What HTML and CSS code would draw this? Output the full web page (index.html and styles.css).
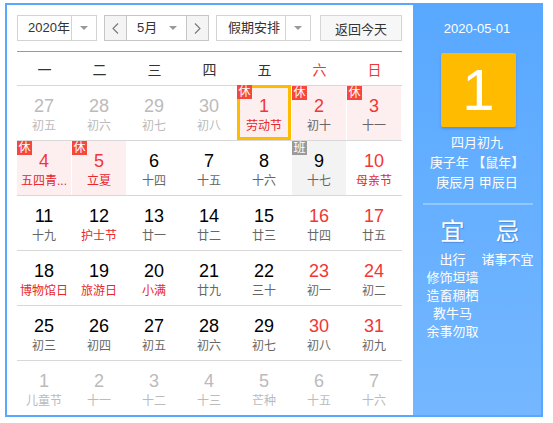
FILE: index.html
```html
<!DOCTYPE html>
<html lang="zh-CN">
<head>
<meta charset="utf-8">
<title>万年历</title>
<link rel="stylesheet" href="styles.css">
</head>
<body>
<div class="cal">
  <div class="main">
    <div class="toolbar">
      <div class="sel year"><span class="sel-text">2020年</span><span class="sel-arrow"><i class="tri"></i></span></div>
      <div class="month">
        <span class="nav prev"><svg width="7" height="11" viewBox="0 0 7 11"><path d="M6 0.5 L1 5.5 L6 10.5" fill="none" stroke="#777" stroke-width="1.1"/></svg></span>
        <span class="month-mid"><span class="m-text">5月</span><i class="tri"></i></span>
        <span class="nav next"><svg width="7" height="11" viewBox="0 0 7 11"><path d="M1 0.5 L6 5.5 L1 10.5" fill="none" stroke="#777" stroke-width="1.1"/></svg></span>
      </div>
      <div class="sel holiday"><span class="sel-text">假期安排</span><span class="sel-arrow"><i class="tri"></i></span></div>
      <button class="today">返回今天</button>
    </div>
    <div class="grid">
      <div class="week"><span>一</span><span>二</span><span>三</span><span>四</span><span>五</span><span class="red">六</span><span class="red">日</span></div>
      <div class="row">
        <div class="cell other"><span class="num">27</span><span class="lunar">初五</span></div>
        <div class="cell other"><span class="num">28</span><span class="lunar">初六</span></div>
        <div class="cell other"><span class="num">29</span><span class="lunar">初七</span></div>
        <div class="cell other"><span class="num">30</span><span class="lunar">初八</span></div>
        <div class="cell rest picked"><span class="tag">休</span><span class="num red">1</span><span class="lunar fest">劳动节</span></div>
        <div class="cell rest"><span class="tag">休</span><span class="num red">2</span><span class="lunar">初十</span></div>
        <div class="cell rest"><span class="tag">休</span><span class="num red">3</span><span class="lunar">十一</span></div>
      </div>
      <div class="row">
        <div class="cell rest"><span class="tag">休</span><span class="num red">4</span><span class="lunar fest">五四青...</span></div>
        <div class="cell rest"><span class="tag">休</span><span class="num red">5</span><span class="lunar fest">立夏</span></div>
        <div class="cell"><span class="num">6</span><span class="lunar">十四</span></div>
        <div class="cell"><span class="num">7</span><span class="lunar">十五</span></div>
        <div class="cell"><span class="num">8</span><span class="lunar">十六</span></div>
        <div class="cell work"><span class="tag">班</span><span class="num">9</span><span class="lunar">十七</span></div>
        <div class="cell"><span class="num red">10</span><span class="lunar fest">母亲节</span></div>
      </div>
      <div class="row">
        <div class="cell"><span class="num">11</span><span class="lunar">十九</span></div>
        <div class="cell"><span class="num">12</span><span class="lunar fest">护士节</span></div>
        <div class="cell"><span class="num">13</span><span class="lunar">廿一</span></div>
        <div class="cell"><span class="num">14</span><span class="lunar">廿二</span></div>
        <div class="cell"><span class="num">15</span><span class="lunar">廿三</span></div>
        <div class="cell"><span class="num red">16</span><span class="lunar">廿四</span></div>
        <div class="cell"><span class="num red">17</span><span class="lunar">廿五</span></div>
      </div>
      <div class="row">
        <div class="cell"><span class="num">18</span><span class="lunar fest">博物馆日</span></div>
        <div class="cell"><span class="num">19</span><span class="lunar fest">旅游日</span></div>
        <div class="cell"><span class="num">20</span><span class="lunar fest">小满</span></div>
        <div class="cell"><span class="num">21</span><span class="lunar">廿九</span></div>
        <div class="cell"><span class="num">22</span><span class="lunar">三十</span></div>
        <div class="cell"><span class="num red">23</span><span class="lunar">初一</span></div>
        <div class="cell"><span class="num red">24</span><span class="lunar">初二</span></div>
      </div>
      <div class="row">
        <div class="cell"><span class="num">25</span><span class="lunar">初三</span></div>
        <div class="cell"><span class="num">26</span><span class="lunar">初四</span></div>
        <div class="cell"><span class="num">27</span><span class="lunar">初五</span></div>
        <div class="cell"><span class="num">28</span><span class="lunar">初六</span></div>
        <div class="cell"><span class="num">29</span><span class="lunar">初七</span></div>
        <div class="cell"><span class="num red">30</span><span class="lunar">初八</span></div>
        <div class="cell"><span class="num red">31</span><span class="lunar">初九</span></div>
      </div>
      <div class="row">
        <div class="cell other"><span class="num">1</span><span class="lunar">儿童节</span></div>
        <div class="cell other"><span class="num">2</span><span class="lunar">十一</span></div>
        <div class="cell other"><span class="num">3</span><span class="lunar">十二</span></div>
        <div class="cell other"><span class="num">4</span><span class="lunar">十三</span></div>
        <div class="cell other"><span class="num">5</span><span class="lunar">芒种</span></div>
        <div class="cell other"><span class="num">6</span><span class="lunar">十五</span></div>
        <div class="cell other"><span class="num">7</span><span class="lunar">十六</span></div>
      </div>
    </div>
  </div>
  <div class="side">
    <div class="date">2020-05-01</div>
    <div class="big">1</div>
    <div class="info">
      <div>四月初九</div>
      <div>庚子年 【鼠年】</div>
      <div>庚辰月 甲辰日</div>
    </div>
    <div class="divider"></div>
    <div class="yiji">
      <div class="col">
        <div class="col-title">宜</div>
        <div class="col-items">
          <div>出行</div>
          <div>修饰垣墙</div>
          <div>造畜稠栖</div>
          <div>教牛马</div>
          <div>余事勿取</div>
        </div>
      </div>
      <div class="col">
        <div class="col-title">忌</div>
        <div class="col-items">
          <div>诸事不宜</div>
        </div>
      </div>
    </div>
  </div>
</div>
</body>
</html>
```

FILE: styles.css
```css
* { box-sizing: border-box; }

body {
  margin: 0;
  padding: 3px 0 0 5px;
  background: #fff;
  font-family: "Liberation Sans", "Noto Sans CJK SC", sans-serif;
}

.cal {
  display: flex;
  width: 538px;
  height: 414px;
  border: 2px solid #58a8ff;
}

.main {
  width: 406px;
  padding: 10px 11px 0 10px;
  background: #fff;
}

/* toolbar */
.toolbar {
  display: flex;
  height: 26px;
  font-size: 13px;
  color: #333;
}

.sel {
  display: flex;
  height: 26px;
  border: 1px solid #d3d3d3;
  background: #fff;
}

.sel-text {
  flex: 1;
  line-height: 24px;
  white-space: nowrap;
}

.sel-arrow {
  width: 25px;
  border-left: 1px solid #d3d3d3;
  display: flex;
  align-items: center;
  justify-content: center;
}

.tri {
  display: block;
  width: 0;
  height: 0;
  border-left: 4px solid transparent;
  border-right: 4px solid transparent;
  border-top: 4px solid #999;
}

.year { width: 80px; }
.year .sel-text { padding-left: 10px; }

.month {
  display: flex;
  width: 105px;
  height: 26px;
  margin-left: 7px;
  border: 1px solid #c6c6c6;
}

.nav {
  width: 22px;
  background: #f4f4f4;
  display: flex;
  align-items: center;
  justify-content: center;
}

.prev { border-right: 1px solid #c6c6c6; }
.next { border-left: 1px solid #c6c6c6; }

.month-mid {
  flex: 1;
  display: flex;
  align-items: center;
  padding: 0 9px 0 10px;
  background: #fff;
}

.m-text { line-height: 24px; }
.month-mid .tri { margin-left: auto; }

.holiday { width: 95px; margin-left: 7px; }
.holiday .sel-text { padding-left: 11px; }

.today {
  width: 82px;
  height: 26px;
  margin-left: 9px;
  padding: 0;
  border: 1px solid #d6d6d6;
  background: #f7f7f7;
  font-family: inherit;
  font-size: 13px;
  color: #333;
}

/* grid */
.grid {
  margin-top: 10px;
  border-top: 1px solid #58a8ff;
}

.week {
  display: grid;
  grid-template-columns: repeat(7, 55px);
  height: 33px;
  align-items: center;
  text-align: center;
  font-size: 14px;
  color: #333;
}

.row {
  display: grid;
  grid-template-columns: repeat(7, 54px);
  column-gap: 1px;
  height: 55px;
  border-top: 1px solid #d8d8d8;
}

.cell {
  position: relative;
  height: 54px;
  padding-top: 10px;
  text-align: center;
}

.num {
  display: block;
  font-size: 18px;
  line-height: 21px;
  color: #000;
}

.lunar {
  display: block;
  font-size: 12px;
  line-height: 18px;
  color: #666;
  white-space: nowrap;
}

.red { color: #f23636; }
.num.red { color: #f23636; }
.lunar.fest { color: #e8262b; }

.other .num,
.other .lunar { color: #bbb; }

.rest { background: #fdefef; }
.work { background: #f3f3f3; }

.tag {
  position: absolute;
  top: 0;
  left: 0;
  z-index: 2;
  width: 15px;
  height: 14px;
  font-size: 12px;
  line-height: 14px;
  text-align: center;
  color: #fff;
  background: #f5473b;
}

.work .tag { background: #9a9a9a; }

.picked::after {
  content: "";
  position: absolute;
  top: -1px;
  left: 0;
  right: 0;
  bottom: 0;
  border: 3px solid #ffbb00;
}

.picked .tag { top: -1px; }

/* side panel */
.side {
  width: 128px;
  padding-top: 15px;
  color: #fff;
  background: linear-gradient(#58a8ff, #74b7ff);
}

.date {
  text-align: center;
  font-size: 13px;
  line-height: 18px;
}

.big {
  width: 75px;
  height: 74px;
  margin: 15px 0 0 28px;
  background: #ffbb00;
  border-radius: 2px;
  box-shadow: 0 2px 3px rgba(0, 50, 140, 0.2);
  text-align: center;
  font-size: 58px;
  line-height: 74px;
}

.info {
  margin-top: 6px;
  text-align: center;
  font-size: 13px;
  line-height: 20px;
}

.divider {
  height: 2px;
  margin: 10px 8px 0 10px;
  background: rgba(255, 255, 255, 0.3);
}

.yiji {
  display: flex;
  margin-top: 12px;
  padding-left: 12px;
}

.col {
  width: 55px;
  text-align: center;
}

.col-title {
  font-size: 24px;
  line-height: 30px;
  text-shadow: 1px 1px 1px rgba(0, 40, 120, 0.25);
}

.col-items {
  margin-top: 4px;
  font-size: 13px;
  line-height: 18px;
  white-space: nowrap;
}
```
